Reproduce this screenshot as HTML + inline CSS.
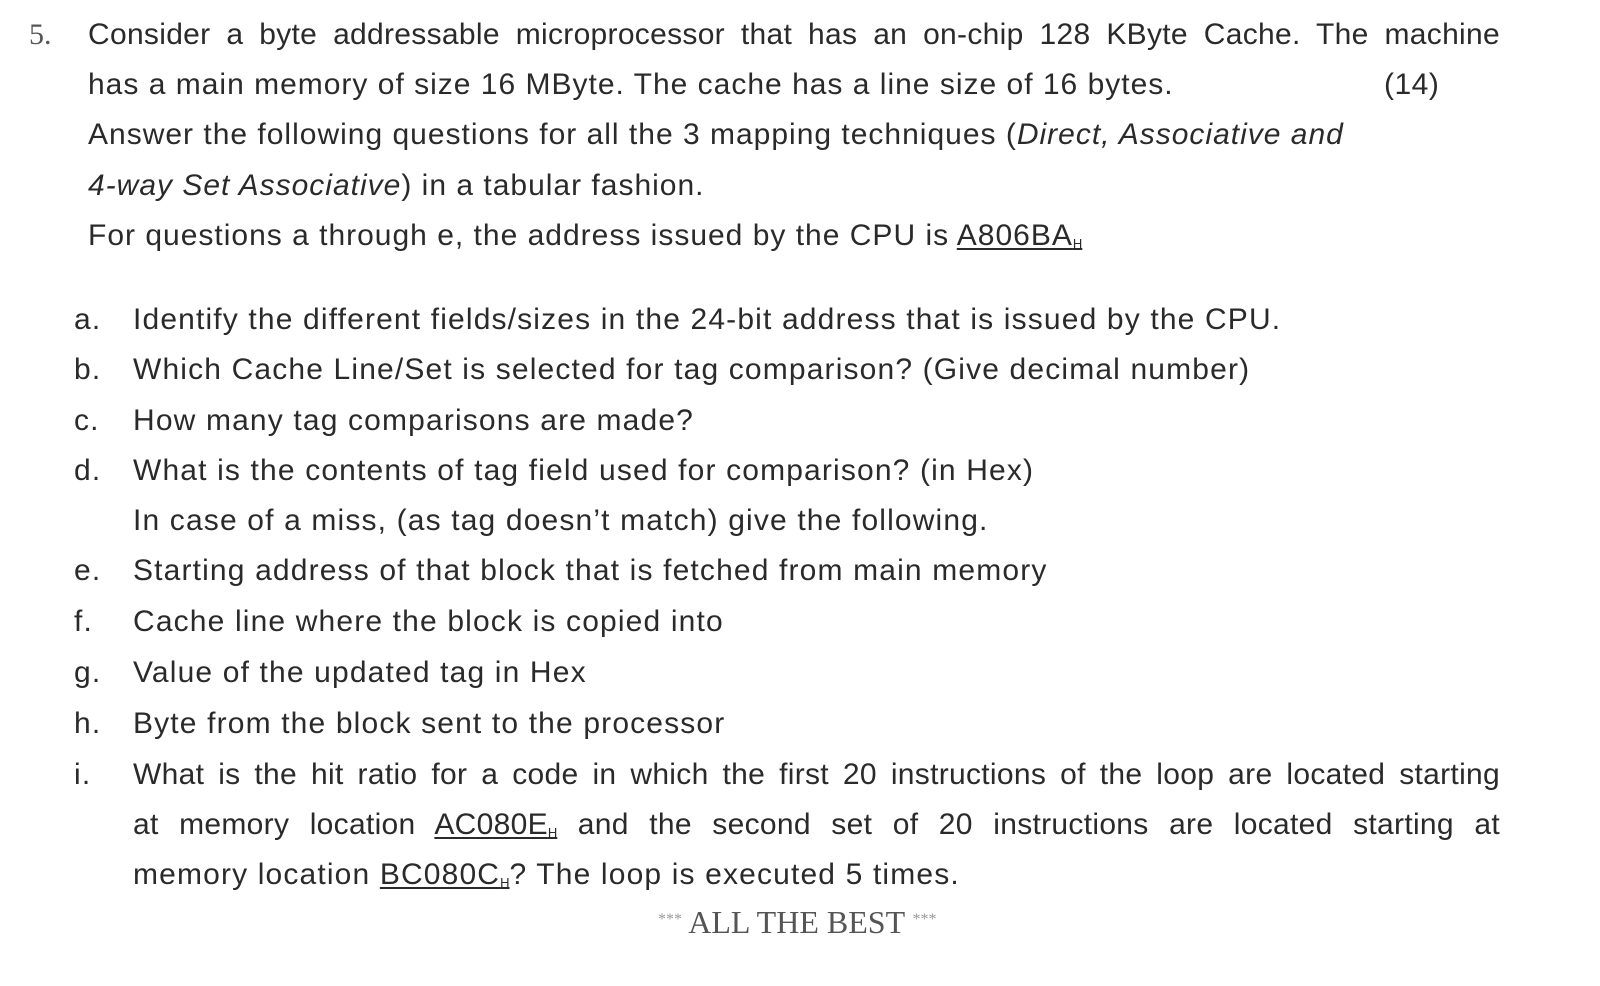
<!DOCTYPE html>
<html><head><meta charset="utf-8"><style>
body{margin:0;width:1600px;height:986px;background:#fff;overflow:hidden;font-family:"Liberation Sans",sans-serif;color:#2a2a2a}
.l{position:absolute;font-size:30px;letter-spacing:1.15px;white-space:nowrap;line-height:34px}
sub{font-size:13px;vertical-align:-3px;letter-spacing:0}
u{text-decoration-thickness:2px;text-underline-offset:3px}
</style></head><body>
<div class="l" style="left:29px;top:18px;font-family:'Liberation Serif',serif;color:#555;letter-spacing:0">5.</div>
<div class="l" style="left:88px;top:18px;width:1412px"><span style="display:block;text-align:justify;text-align-last:justify;letter-spacing:0.3px">Consider a byte addressable microprocessor that has an on-chip 128 KByte Cache. The machine</span></div>
<div class="l" style="left:88px;top:68px;letter-spacing:1px">has a main memory of size 16 MByte. The cache has a line size of 16 bytes.</div>
<div class="l" style="left:1384px;top:68px;letter-spacing:0.5px">(14)</div>
<div class="l" style="left:88px;top:118px;letter-spacing:1px">Answer the following questions for all the 3 mapping techniques (<i>Direct, Associative and</i></div>
<div class="l" style="left:88px;top:169px;letter-spacing:1px"><i>4-way Set Associative</i>) in a tabular fashion.</div>
<div class="l" style="left:88px;top:219px;letter-spacing:1px">For questions a through e, the address issued by the CPU is <u>A806BA<sub>H</sub></u></div>

<div class="l" style="left:74px;top:303px">a.</div><div class="l" style="left:133px;top:303px">Identify the different fields/sizes in the 24-bit address that is issued by the CPU.</div>
<div class="l" style="left:74px;top:353px">b.</div><div class="l" style="left:133px;top:353px">Which Cache Line/Set is selected for tag comparison? (Give decimal number)</div>
<div class="l" style="left:74px;top:404px">c.</div><div class="l" style="left:133px;top:404px">How many tag comparisons are made?</div>
<div class="l" style="left:74px;top:454px">d.</div><div class="l" style="left:133px;top:454px">What is the contents of tag field used for comparison? (in Hex)</div>
<div class="l" style="left:133px;top:504px">In case of a miss, (as tag doesn’t match) give the following.</div>
<div class="l" style="left:74px;top:554px">e.</div><div class="l" style="left:133px;top:554px">Starting address of that block that is fetched from main memory</div>
<div class="l" style="left:74px;top:605px">f.</div><div class="l" style="left:133px;top:605px">Cache line where the block is copied into</div>
<div class="l" style="left:74px;top:656px">g.</div><div class="l" style="left:133px;top:656px">Value of the updated tag in Hex</div>
<div class="l" style="left:74px;top:707px">h.</div><div class="l" style="left:133px;top:707px">Byte from the block sent to the processor</div>
<div class="l" style="left:74px;top:758px">i.</div><div class="l" style="left:133px;top:758px;width:1367px"><span style="display:block;text-align:justify;text-align-last:justify;letter-spacing:0.3px">What is the hit ratio for a code in which the first 20 instructions of the loop are located starting</span></div>
<div class="l" style="left:133px;top:808px;width:1367px"><span style="display:block;text-align:justify;text-align-last:justify;letter-spacing:0.3px">at memory location <u>AC080E<sub>H</sub></u> and the second set of 20 instructions are located starting at</span></div>
<div class="l" style="left:133px;top:858px">memory location <u>BC080C<sub>H</sub></u>? The loop is executed 5 times.</div>
<div class="l" style="left:658px;top:903px;font-family:'Liberation Serif',serif;font-size:32px;letter-spacing:0;color:#555"><span style="font-size:16px;vertical-align:9px;color:#999">***</span> ALL THE BEST <span style="font-size:16px;vertical-align:9px;color:#999">***</span></div>
</body></html>
